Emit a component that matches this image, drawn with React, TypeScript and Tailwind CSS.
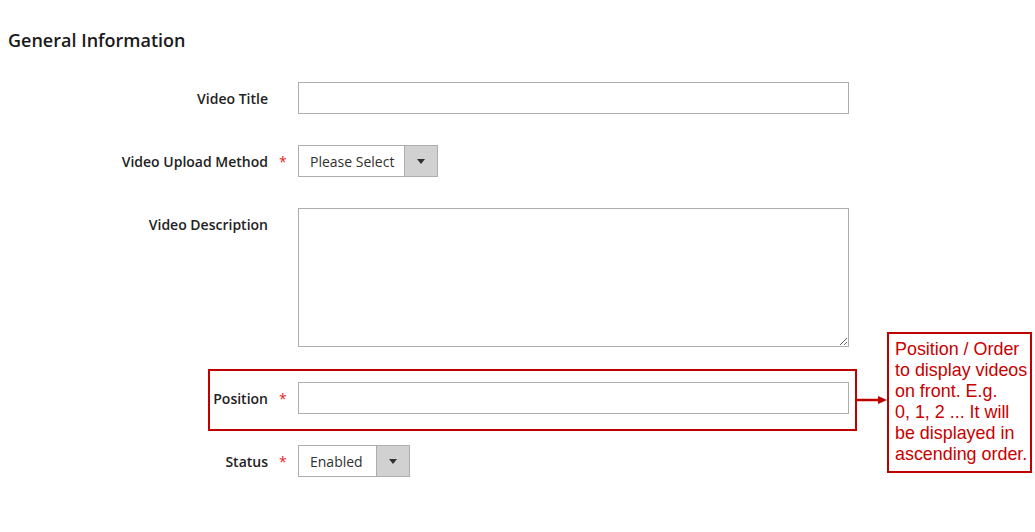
import React from "react";

const labelCls =
  "w-[268px] shrink-0 text-right text-[14px] font-semibold leading-[34px] text-[#222222]";
const starCls = "w-[30px] shrink-0 pl-[11px] text-[14px] leading-[34px] text-[#e22626]";

function Star() {
  return <span className={starCls}>*</span>;
}

function SelectBox({ value, width }: { value: string; width: string }) {
  return (
    <div className={`flex h-[32px] ${width} border border-[#adadad] bg-white`}>
      <div className="flex-1 pl-[11px] text-[14px] leading-[31px] text-[#303030]">{value}</div>
      <div className="flex w-[33px] items-center justify-center border-l border-[#adadad] bg-[#d1d1d1]">
        <svg width="8" height="5" viewBox="0 0 8 5">
          <polygon points="0,0 8,0 4,5" fill="#303030" />
        </svg>
      </div>
    </div>
  );
}

export default function App() {
  return (
    <div
      className="h-[532px] w-[1035px] bg-white pt-[29px]"
      style={{ fontFamily: '"Open Sans", "Noto Sans", sans-serif' }}
    >
      <h2 className="ml-[8px] text-[18px] font-semibold leading-[22px] text-[#1a1a1a]">
        General Information
      </h2>

      <div className="mt-[31px] flex flex-col">
        <div className="flex h-[32px]">
          <span className={labelCls}>Video Title</span>
          <span className="w-[30px] shrink-0" />
          <input className="h-[32px] w-[551px] border border-[#adadad] bg-white outline-none" />
        </div>

        <div className="mt-[31px] flex h-[32px]">
          <span className={labelCls}>Video Upload Method</span>
          <Star />
          <SelectBox value="Please Select" width="w-[140px]" />
        </div>

        <div className="mt-[31px] flex">
          <span className={`${labelCls} self-start`}>Video Description</span>
          <span className="w-[30px] shrink-0" />
          <textarea className="h-[139px] w-[551px] resize border border-[#adadad] bg-white outline-none" />
        </div>

        <div className="relative ml-[208px] mt-[22px] flex h-[62px] w-[649px] border-2 border-[#c00000] pb-[15px] pr-[6px] pt-[11px]">
          <span className="w-[58px] shrink-0 text-right text-[14px] font-semibold leading-[34px] text-[#222222]">
            Position
          </span>
          <Star />
          <input className="h-[32px] w-[551px] border border-[#adadad] bg-white outline-none" />

          <svg
            className="absolute left-[647px] top-[23px]"
            width="30"
            height="12"
            viewBox="0 0 30 12"
          >
            <line x1="0" y1="6" x2="23" y2="6" stroke="#c00000" strokeWidth="2.5" />
            <polygon points="21,2 30,6 21,10" fill="#c00000" />
          </svg>

          <div
            className="absolute left-[677px] top-[-39px] h-[141px] w-[145px] border-2 border-[#c00000] bg-white pl-[6px] pt-[5px] text-[17.9px] leading-[21px] text-[#c80000]"
            style={{ fontFamily: '"Liberation Sans", Arial, sans-serif' }}
          >
            Position / Order
            <br />
            to display videos
            <br />
            on front. E.g.
            <br />
            0, 1, 2 ... It will
            <br />
            be displayed in
            <br />
            ascending order.
          </div>
        </div>

        <div className="mt-[14px] flex h-[32px]">
          <span className={labelCls}>Status</span>
          <Star />
          <SelectBox value="Enabled" width="w-[112px]" />
        </div>
      </div>
    </div>
  );
}
